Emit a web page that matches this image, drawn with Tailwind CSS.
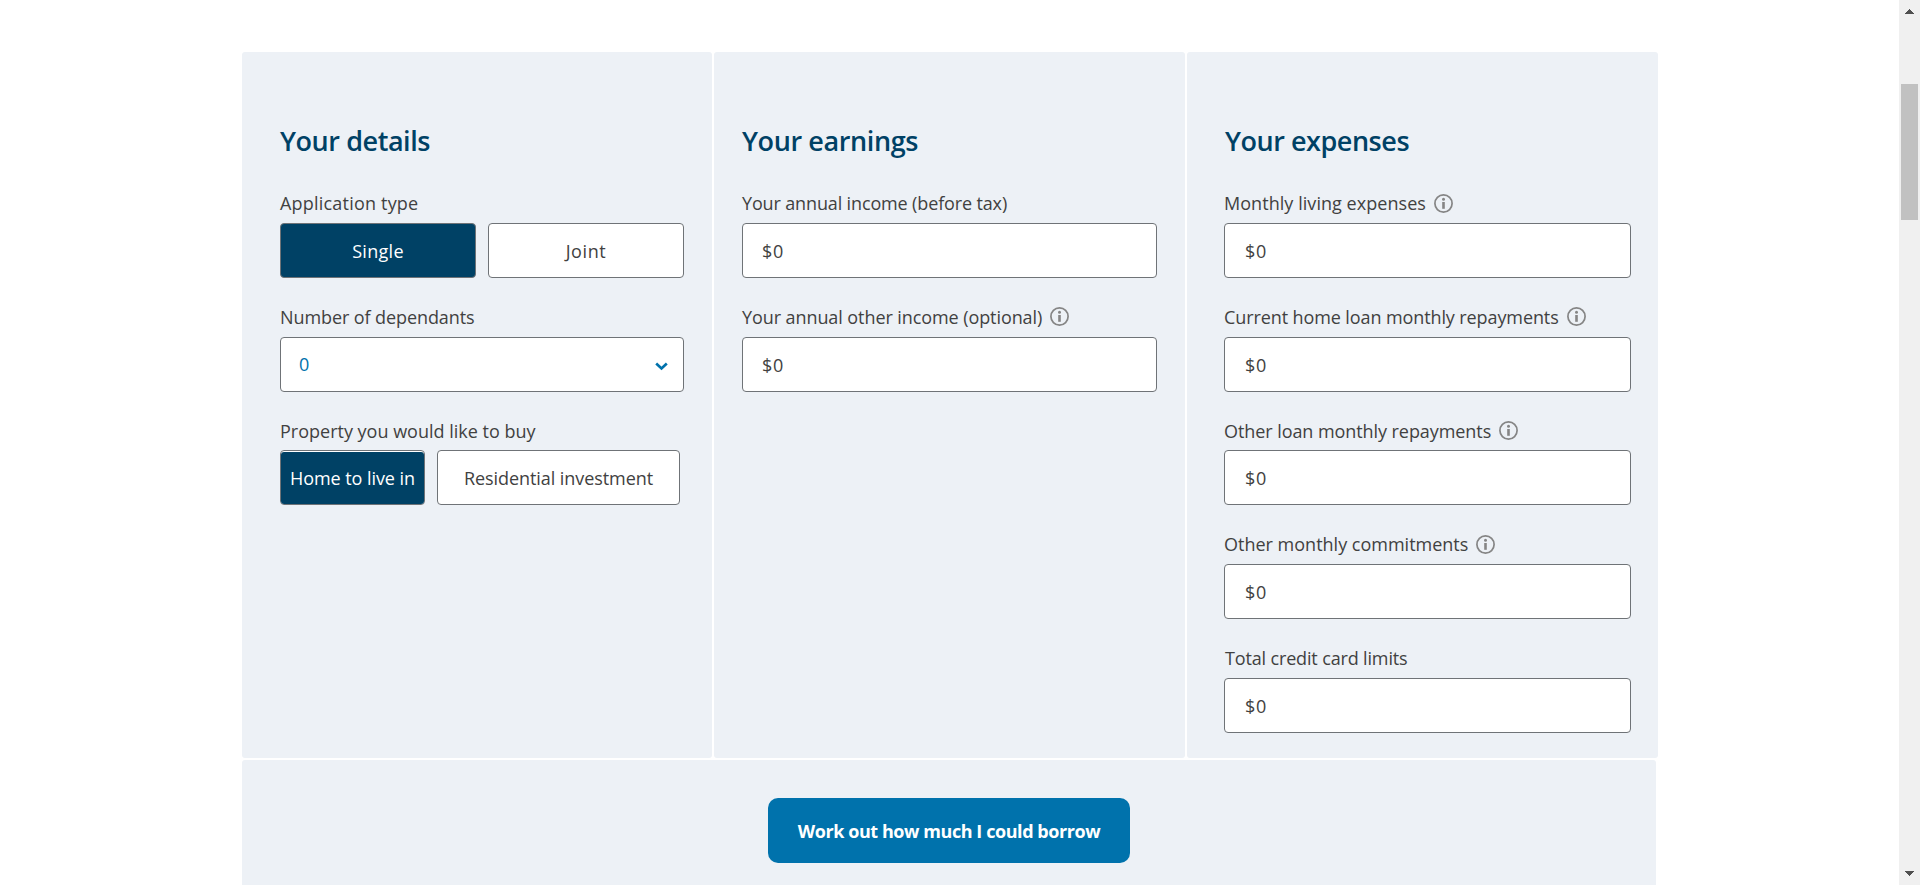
<!DOCTYPE html>
<html lang="en">
<head>
<meta charset="utf-8">
<title>Borrowing calculator</title>
<script src="https://cdn.jsdelivr.net/npm/@tailwindcss/browser@4"></script>
</head>
<body class="flex h-[885px] overflow-hidden bg-white font-['Open_Sans',sans-serif] text-[18px] leading-6 text-[#414141]">
<svg class="hidden">
  <symbol id="info" viewBox="0 0 19 19">
    <circle cx="9.5" cy="9.5" r="8.6" fill="none" stroke="#858585" stroke-width="1.7"/>
    <circle cx="9.5" cy="5.3" r="1.5" fill="#858585"/>
    <path d="M9.5 8v6.8" stroke="#858585" stroke-width="2.6"/>
  </symbol>
</svg>
<main class="h-[885px] flex-1 overflow-hidden pt-[52px] pl-[242px]">
  <div class="flex h-[706px] gap-[2px]">
    <section class="w-[470px] rounded-[3px] bg-[#edf1f6] pt-[72px] pl-[38px]">
      <h2 class="mb-[33px] text-[27px] leading-[34px] font-semibold tracking-[-0.43px] whitespace-nowrap text-[#004165]">Your details</h2>
      <div class="flex w-[404px] flex-col gap-[26.7px]">
        <div>
          <div class="mb-2 flex h-6 items-center"><span class="tracking-[0.2px] whitespace-nowrap">Application type</span></div>
          <div class="flex gap-3">
            <button class="h-[55px] w-[196px] rounded-[4px] border border-[#6f7377] bg-[#004165] pt-px tracking-[0.3px] text-white">Single</button>
            <button class="h-[55px] w-[196px] rounded-[4px] border border-[#6f7377] bg-white pt-px tracking-[0.6px]">Joint</button>
          </div>
        </div>
        <div>
          <div class="mb-2 flex h-6 items-center"><span class="tracking-[-0.09px] whitespace-nowrap">Number of dependants</span></div>
          <div class="flex h-[55px] items-center justify-between rounded-[4px] border border-[#6f7377] bg-white pr-[15px] pl-[18px] text-[#0072ac]">
            <span>0</span>
            <svg class="mt-[5px] h-[9px] w-[13px]" viewBox="0 0 13 9"><path d="M1.2 1.6 6.5 6.4 11.8 1.6" fill="none" stroke="#0072ac" stroke-width="2.7"/></svg>
          </div>
        </div>
        <div>
          <div class="mb-2 flex h-6 items-center pt-px"><span class="whitespace-nowrap">Property you would like to buy</span></div>
          <div class="flex gap-3">
            <button class="h-[55px] w-[145px] rounded-[4px] border border-[#6f7377] bg-white pt-px whitespace-nowrap text-white"><span class="flex h-full items-center justify-center rounded-[3px] bg-[#004165] tracking-[-0.07px]">Home to live in</span></button>
            <button class="h-[55px] w-[243px] rounded-[4px] border border-[#6f7377] bg-white pt-px tracking-[-0.07px] whitespace-nowrap">Residential investment</button>
          </div>
        </div>
      </div>
    </section>
    <section class="w-[471px] rounded-[3px] bg-[#edf1f6] pt-[72px] pl-[28px]">
      <h2 class="mb-[33px] text-[27px] leading-[34px] font-semibold tracking-[-0.39px] whitespace-nowrap text-[#004165]">Your earnings</h2>
      <div class="flex w-[415px] flex-col gap-[26.7px]">
        <div>
          <div class="mb-2 flex h-6 items-center"><span class="tracking-[-0.14px] whitespace-nowrap">Your annual income (before tax)</span></div>
          <div class="flex h-[55px] items-center rounded-[4px] border border-[#6f7377] bg-white pt-px pl-[19px] tracking-[0.7px]">$0</div>
        </div>
        <div>
          <div class="mb-2 flex h-6 items-center gap-2"><span class="tracking-[-0.08px] whitespace-nowrap">Your annual other income (optional)</span><svg class="size-[19px]"><use href="#info"/></svg></div>
          <div class="flex h-[55px] items-center rounded-[4px] border border-[#6f7377] bg-white pt-[2px] pl-[19px] tracking-[0.7px]">$0</div>
        </div>
      </div>
    </section>
    <section class="w-[471px] rounded-[3px] bg-[#edf1f6] pt-[72px] pl-[37px]">
      <h2 class="mb-[33px] pl-px text-[27px] leading-[34px] font-semibold tracking-[-0.46px] whitespace-nowrap text-[#004165]">Your expenses</h2>
      <div class="flex w-[407px] flex-col gap-[26.7px]">
        <div>
          <div class="mb-2 flex h-6 items-center gap-2"><span class="tracking-[0.05px] whitespace-nowrap">Monthly living expenses</span><svg class="size-[19px]"><use href="#info"/></svg></div>
          <div class="flex h-[55px] items-center rounded-[4px] border border-[#6f7377] bg-white pt-px pl-[20px] tracking-[0.7px]">$0</div>
        </div>
        <div>
          <div class="mb-2 flex h-6 items-center gap-2"><span class="tracking-[-0.1px] whitespace-nowrap">Current home loan monthly repayments</span><svg class="size-[19px]"><use href="#info"/></svg></div>
          <div class="flex h-[55px] items-center rounded-[4px] border border-[#6f7377] bg-white pt-[2px] pl-[20px] tracking-[0.7px]">$0</div>
        </div>
        <div>
          <div class="mb-2 flex h-6 items-center gap-2 pt-px"><span class="tracking-[-0.07px] whitespace-nowrap">Other loan monthly repayments</span><svg class="size-[19px]"><use href="#info"/></svg></div>
          <div class="flex h-[55px] items-center rounded-[4px] border border-[#6f7377] bg-white pt-px pl-[20px] tracking-[0.7px]">$0</div>
        </div>
        <div>
          <div class="mb-2 flex h-6 items-center gap-2"><span class="whitespace-nowrap">Other monthly commitments</span><svg class="size-[19px]"><use href="#info"/></svg></div>
          <div class="flex h-[55px] items-center rounded-[4px] border border-[#6f7377] bg-white pt-px pl-[20px] tracking-[0.7px]">$0</div>
        </div>
        <div>
          <div class="mb-2 flex h-6 items-center pl-px"><span class="tracking-[-0.15px] whitespace-nowrap">Total credit card limits</span></div>
          <div class="flex h-[55px] items-center rounded-[4px] border border-[#6f7377] bg-white pt-[2px] pl-[20px] tracking-[0.7px]">$0</div>
        </div>
      </div>
    </section>
  </div>
  <div class="mt-[2px] flex h-[160px] w-[1414px] justify-center rounded-[3px] bg-[#edf1f6] pt-[38px]">
    <button class="h-[65px] w-[362px] rounded-[10px] bg-[#0072ac] pt-px font-bold tracking-[-0.43px] whitespace-nowrap text-white">Work out how much I could borrow</button>
  </div>
</main>
<aside class="flex h-[885px] w-[21px] flex-col items-center bg-[#f0f0f0]">
  <svg class="mt-[9px] h-[5px] w-[9px]" viewBox="0 0 9 5" shape-rendering="crispEdges"><path d="M0 5 4.5 0 9 5z" fill="#505050"/></svg>
  <div class="mt-[70px] h-[136px] w-[17px] bg-[#c1c1c1]"></div>
  <svg class="mt-auto mb-[9px] h-[5px] w-[9px]" viewBox="0 0 9 5" shape-rendering="crispEdges"><path d="M0 0 4.5 5 9 0z" fill="#505050"/></svg>
</aside>
</body>
</html>
